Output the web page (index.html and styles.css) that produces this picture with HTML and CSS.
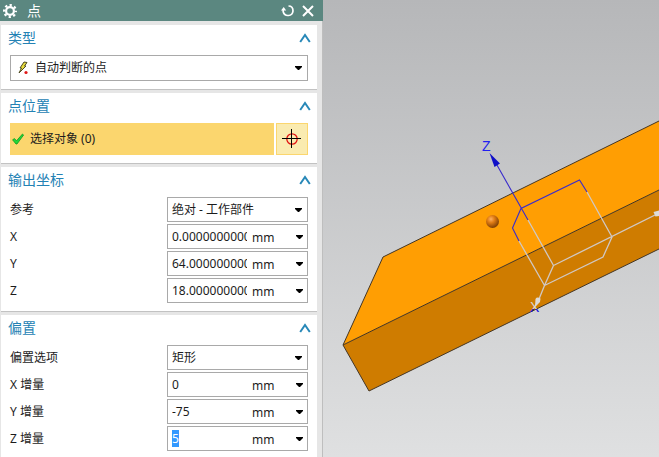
FILE: index.html
```html
<!DOCTYPE html>
<html lang="zh-CN">
<head>
<meta charset="utf-8">
<title>点</title>
<link rel="stylesheet" href="styles.css">
</head>
<body>
<main class="workspace">
  <form class="dialog">
    <header class="titlebar">
      <svg class="gear" viewBox="0 0 14 14" aria-hidden="true">
        <circle cx="7" cy="7" r="5.9" fill="none" stroke="#fff" stroke-width="2.2" stroke-dasharray="2.3 2.334" stroke-dashoffset="1.15"/>
        <circle cx="7" cy="7" r="3.9" fill="none" stroke="#fff" stroke-width="2.2"/>
      </svg>
      <h1>点</h1>
      <button type="button" class="tool" aria-label="重置">
        <svg viewBox="0 0 14 14"><path d="M7.5 2C10.500 2 12 4.200 12 7A5 5 0 0 1 2.200 7.800V5" fill="none" stroke="#fff" stroke-width="1.700"/><path d="M0 6.500L2.700 3L5.200 6.500Z" fill="#fff"/></svg>
      </button>
      <button type="button" class="tool" aria-label="关闭">
        <svg viewBox="0 0 14 14"><path d="M2 2L12 12M12 2L2 12" stroke="#fff" stroke-width="2"/></svg>
      </button>
    </header>

    <section class="group">
      <h2>类型 <button type="button" class="fold" aria-label="折叠类型"><svg viewBox="0 0 12 10"><path d="M1.200 9L6 2L10.800 9" /></svg></button></h2>
      <div class="combo combo-type">
        <svg class="bolt" viewBox="0 0 10 14" aria-hidden="true"><path d="M6 1L9 1.500L6.500 5H8L1 12L3.500 7H2Z" fill="#e8dc3c" stroke="#4d4a22" stroke-width="1"/><circle cx="8" cy="11.500" r="1.600" fill="#e01818"/></svg>
        <select aria-label="类型"><option>自动判断的点</option></select>
        <svg class="caret" viewBox="0 0 7 4" aria-hidden="true"><path d="M0 0H7V1L4 4H3L0 1Z"/></svg>
      </div>
    </section>

    <section class="group">
      <h2>点位置 <button type="button" class="fold" aria-label="折叠点位置"><svg viewBox="0 0 12 10"><path d="M1.200 9L6 2L10.800 9" /></svg></button></h2>
      <div class="pick">
        <button type="button" class="pick-object">
          <svg viewBox="0 0 12 12" aria-hidden="true"><path d="M.6 6.800L2.500 5.600L4.500 7.800L10.500 1L11.600 2L5 11H4Z" fill="#22d83a" stroke="#129a20" stroke-width=".8"/></svg>
          选择对象 (0)
        </button>
        <button type="button" class="pick-point" aria-label="点对话框">
          <svg viewBox="0 0 20 20"><circle cx="10" cy="10" r="5.200" fill="none" stroke="#e01010" stroke-width="1.300"/><path d="M9.500 0V19M0 9.500H19" stroke="#000"/></svg>
        </button>
      </div>
    </section>

    <section class="group">
      <h2>输出坐标 <button type="button" class="fold" aria-label="折叠输出坐标"><svg viewBox="0 0 12 10"><path d="M1.200 9L6 2L10.800 9" /></svg></button></h2>
      <div class="fields">
        <label for="ref">参考</label>
        <div class="combo"><select id="ref"><option>绝对 - 工作部件</option></select><svg class="caret" viewBox="0 0 7 4" aria-hidden="true"><path d="M0 0H7V1L4 4H3L0 1Z"/></svg></div>
        <label for="x">X</label>
        <div class="combo"><input id="x" value="0.000000000000"><span class="unit">mm</span><button type="button" class="menu" aria-label="X 选项"><svg viewBox="0 0 7 4"><path d="M0 0H7V1L4 4H3L0 1Z"/></svg></button></div>
        <label for="y">Y</label>
        <div class="combo"><input id="y" value="64.00000000000"><span class="unit">mm</span><button type="button" class="menu" aria-label="Y 选项"><svg viewBox="0 0 7 4"><path d="M0 0H7V1L4 4H3L0 1Z"/></svg></button></div>
        <label for="z">Z</label>
        <div class="combo"><input id="z" value="18.00000000000"><span class="unit">mm</span><button type="button" class="menu" aria-label="Z 选项"><svg viewBox="0 0 7 4"><path d="M0 0H7V1L4 4H3L0 1Z"/></svg></button></div>
      </div>
    </section>

    <section class="group group-last">
      <h2>偏置 <button type="button" class="fold" aria-label="折叠偏置"><svg viewBox="0 0 12 10"><path d="M1.200 9L6 2L10.800 9" /></svg></button></h2>
      <div class="fields">
        <label for="offset">偏置选项</label>
        <div class="combo"><select id="offset"><option>矩形</option></select><svg class="caret" viewBox="0 0 7 4" aria-hidden="true"><path d="M0 0H7V1L4 4H3L0 1Z"/></svg></div>
        <label for="dx">X 增量</label>
        <div class="combo"><input id="dx" value="0"><span class="unit">mm</span><button type="button" class="menu" aria-label="X 增量选项"><svg viewBox="0 0 7 4"><path d="M0 0H7V1L4 4H3L0 1Z"/></svg></button></div>
        <label for="dy">Y 增量</label>
        <div class="combo"><input id="dy" value="-75"><span class="unit">mm</span><button type="button" class="menu" aria-label="Y 增量选项"><svg viewBox="0 0 7 4"><path d="M0 0H7V1L4 4H3L0 1Z"/></svg></button></div>
        <label for="dz">Z 增量</label>
        <div class="combo"><input id="dz" value="5"><span class="unit">mm</span><button type="button" class="menu" aria-label="Z 增量选项"><svg viewBox="0 0 7 4"><path d="M0 0H7V1L4 4H3L0 1Z"/></svg></button></div>
      </div>
    </section>
  </form>

  <svg class="scene" viewBox="323 0 336 457" preserveAspectRatio="xMinYMin slice" role="img" aria-label="三维模型">
    <defs>
      <radialGradient id="ball" cx=".38" cy=".32" r=".7"><stop offset="0" stop-color="#ffb060"/><stop offset=".4" stop-color="#e07c14"/><stop offset="1" stop-color="#7a3c04"/></radialGradient>
      <linearGradient id="xink" x1="0" y1="302" x2="0" y2="313" gradientUnits="userSpaceOnUse"><stop offset=".68" stop-color="#d8d8d8"/><stop offset=".68" stop-color="#1010e0"/></linearGradient>
    </defs>
    <path d="M383 257L659 121V190L343 345Z" fill="#ff9e03"/>
    <path d="M343 345L659 190V249L369 391Z" fill="#cf7c00"/>
    <path d="M659 121L383 257L343 345L369 391L659 249M343 345L659 190" fill="none" stroke="#453624" stroke-width="1"/>
    <circle cx="492.500" cy="221.500" r="6.500" fill="url(#ball)"/>
    <g fill="none" stroke="#d0c8c4" stroke-width="1.300">
      <path d="M528 220L553.500 265.500L659 213M553.500 265.500L544.500 285.500L537 304M587 192L612 237L603 257L544.500 285.500L519 241"/>
    </g>
    <path d="M493 158L528 220M587 192L579.500 180L521 208.500L512.500 228L519 241" fill="none" stroke="#3a2ccc" stroke-width="1.100"/>
    <path d="M489.500 153L500 163.500L494.500 167Z" fill="#1010c8"/>
    <path d="M653.500 212L659 210.500V216L655.500 216.500Z" fill="#dcdcdc"/>
    <path d="M535.500 299Q537 296.500 540.500 298.500L540 302L535 307Z" fill="#dedad6"/>
    <text x="482" y="151" fill="#2020f0">Z</text>
    <text x="530" y="312" fill="url(#xink)">X</text>
  </svg>
</main>
<script src="script.js"></script>
</body>
</html>
```
FILE: styles.css
```css
* { box-sizing: border-box; }

body {
  margin: 0;
  font: 12px/16px "Noto Sans", "Noto Sans CJK SC", sans-serif;
  color: #1c1c1c;
}

button, input, select { font: inherit; color: inherit; border: 0; padding: 0; margin: 0; background: none; border-radius: 0; }
input:focus { outline: none; }
svg { display: block; flex: none; }

.workspace {
  display: flex;
  height: 100vh;
  overflow: hidden;
  background: linear-gradient(#b6b7b9, #dfe0e1);
}

.dialog {
  flex: none;
  display: flex;
  flex-direction: column;
  width: 323px;
  background: #e6e6e6;
  border-right: 1px solid #bebebe;
}

.titlebar {
  display: flex;
  align-items: center;
  gap: 6px;
  height: 21px;
  flex: none;
  margin: 0 -1px 4px 0;
  padding: 0 8px 0 3px;
  background: #5b8780;
  color: #fff;
}
.titlebar h1 { flex: 1; margin: 0 0 0 4px; font-size: 14px; font-weight: 400; line-height: 20px; }
.gear, .tool svg { width: 14px; height: 14px; }

.group {
  flex: none;
  margin: 0 5px 3px 1px;
  padding: 0 9px 8px;
  background: #fff;
  border-bottom: 1px solid #c2c2c2;
}
.group-last { flex: 1 0 auto; margin-bottom: 0; }

.group h2 {
  display: flex;
  justify-content: space-between;
  align-items: center;
  height: 26px;
  margin: 0 -3px 4px -2px;
  font-size: 14px;
  font-weight: 400;
  color: #2482b4;
}
.fold svg { width: 12px; height: 10px; fill: none; stroke: #2888b8; stroke-width: 2; }

.combo {
  display: flex;
  align-items: center;
  position: relative;
  height: 25px;
  border: 1px solid #a9a9a9;
  background: #fff;
}
.combo-type { height: 26px; padding-left: 7px; }
.combo select { flex: 1; min-width: 0; height: 100%; padding-left: 4px; appearance: none; }
.combo-type select { padding-left: 7px; }
.caret { position: absolute; right: 5px; width: 7px; height: 4px; pointer-events: none; }
.bolt { width: 10px; height: 14px; }

.combo input { width: 75px; margin-left: 4px; height: 20px; }
.combo input::selection { background: #3399ff; color: #fff; }
.unit { margin: 2px 0 0 5px; }
.menu { width: 16px; height: 100%; margin-left: auto; }
.menu svg { width: 7px; height: 4px; margin: auto; }

.fields {
  display: grid;
  grid-template-columns: 157px 1fr;
  row-gap: 2px;
  align-items: center;
}

.pick { display: flex; gap: 2px; height: 32px; }
.pick-object {
  flex: 1;
  display: flex;
  align-items: center;
  gap: 6px;
  padding-left: 2px;
  background: #fbd66e;
}
.pick-object svg { width: 12px; height: 12px; }
.pick-point {
  width: 32px;
  display: flex;
  align-items: center;
  justify-content: center;
  background: #faebb0;
  border: 1px solid #fbd66e;
}
.pick-point svg { width: 20px; height: 20px; }

.scene { flex: 1; min-width: 0; height: 100%; font: 14px "Liberation Sans", sans-serif; }
```
FILE: script.js
```js
const activeField = document.getElementById("dz");
activeField.focus({ preventScroll: true });
activeField.select();
```
